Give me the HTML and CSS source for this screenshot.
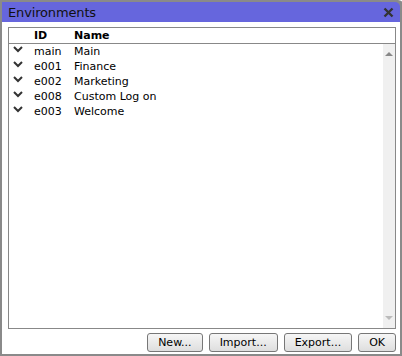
FILE: index.html
```html
<!DOCTYPE html>
<html lang="en">
<head>
<meta charset="UTF-8">
<title>Environments</title>
<link rel="stylesheet" href="styles.css">
</head>
<body>
    <div class="dialog">
        <div class="title-bar">
            <span class="title">Environments</span>
            <span class="close">
                <svg width="11" height="11" viewBox="0 0 11 11"><path d="M1.5 1.5 L9.5 9.5 M9.5 1.5 L1.5 9.5" stroke="#333" stroke-width="2.4"/></svg>
            </span>
        </div>
        <div class="content">
            <div class="list">
                <div class="list-head">
                    <span class="col-icon"></span>
                    <span class="col-id">ID</span>
                    <span class="col-name">Name</span>
                </div>
                <div class="list-body">
                    <div class="rows">
                        <div class="row"><span class="col-icon"><svg class="chev" width="10" height="7" viewBox="0 0 10 7"><path d="M1 1 L5 5 L9 1" stroke="#333" stroke-width="2" fill="none"/></svg></span><span class="col-id">main</span><span class="col-name">Main</span></div>
                        <div class="row"><span class="col-icon"><svg class="chev" width="10" height="7" viewBox="0 0 10 7"><path d="M1 1 L5 5 L9 1" stroke="#333" stroke-width="2" fill="none"/></svg></span><span class="col-id">e001</span><span class="col-name">Finance</span></div>
                        <div class="row"><span class="col-icon"><svg class="chev" width="10" height="7" viewBox="0 0 10 7"><path d="M1 1 L5 5 L9 1" stroke="#333" stroke-width="2" fill="none"/></svg></span><span class="col-id">e002</span><span class="col-name">Marketing</span></div>
                        <div class="row"><span class="col-icon"><svg class="chev" width="10" height="7" viewBox="0 0 10 7"><path d="M1 1 L5 5 L9 1" stroke="#333" stroke-width="2" fill="none"/></svg></span><span class="col-id">e008</span><span class="col-name">Custom Log on</span></div>
                        <div class="row"><span class="col-icon"><svg class="chev" width="10" height="7" viewBox="0 0 10 7"><path d="M1 1 L5 5 L9 1" stroke="#333" stroke-width="2" fill="none"/></svg></span><span class="col-id">e003</span><span class="col-name">Welcome</span></div>
                    </div>
                    <div class="scrollbar">
                        <span class="arrow up"></span>
                        <span class="arrow down"></span>
                    </div>
                </div>
            </div>
            <div class="buttons">
                <button class="btn">New...</button>
                <button class="btn">Import...</button>
                <button class="btn">Export...</button>
                <button class="btn">OK</button>
            </div>
        </div>
    </div>
</body>
</html>
```

FILE: styles.css
```css
body {
    margin: 0;
    padding: 0;
    background-color: #ffffff;
    font-family: "DejaVu Sans", Verdana, sans-serif;
}

.dialog {
    width: 398px;
    height: 352px;
    background-color: #8a8a8a;
    padding: 2px 4px 4px 2px;
    display: flex;
    flex-direction: column;
    border-top-right-radius: 6px;
}

.title-bar {
    height: 20px;
    background-color: #6666dd;
    display: flex;
    align-items: center;
    justify-content: space-between;
    padding: 0 6px 0 6px;
    border-top-right-radius: 5px;
}

.title {
    font-size: 13px;
    letter-spacing: -0.15px;
    color: #111;
}

.close {
    display: flex;
}

.content {
    flex: 1;
    background-color: #ffffff;
    padding: 5px 4px 0 6px;
    display: flex;
    flex-direction: column;
}

.list {
    height: 300px;
    border: 1px solid #888;
    display: flex;
    flex-direction: column;
}

.list-head {
    height: 15px;
    border-bottom: 1px solid #888;
    display: flex;
    align-items: center;
    font-size: 11px;
    font-weight: bold;
    color: #000;
}

.list-body {
    flex: 1;
    display: flex;
}

.rows {
    flex: 1;
    font-size: 11px;
}

.row {
    height: 15px;
    display: flex;
    align-items: center;
}

.col-icon {
    width: 25px;
    padding-left: 4px;
    box-sizing: border-box;
    display: flex;
    align-self: flex-start;
    padding-top: 2px;
}

.list-head .col-icon {
    align-self: center;
    padding-top: 0;
}

.col-id {
    width: 40px;
}

.scrollbar {
    width: 12px;
    background-color: #f0f0f0;
    display: flex;
    flex-direction: column;
    justify-content: space-between;
    align-items: center;
    padding: 8px 0;
}

.arrow {
    width: 0;
    height: 0;
    border-left: 4px solid transparent;
    border-right: 4px solid transparent;
}

.arrow.up {
    border-bottom: 4px solid #888;
}

.arrow.down {
    border-top: 4px solid #bbb;
}

.buttons {
    display: flex;
    justify-content: flex-end;
    gap: 6px;
    padding-top: 4px;
}

.btn {
    height: 19px;
    padding: 0 10px;
    font-family: "DejaVu Sans", Verdana, sans-serif;
    font-size: 11px;
    color: #000;
    background: linear-gradient(#f6f6f6, #dedede);
    border: 1px solid #777;
    border-radius: 3px;
}
```
